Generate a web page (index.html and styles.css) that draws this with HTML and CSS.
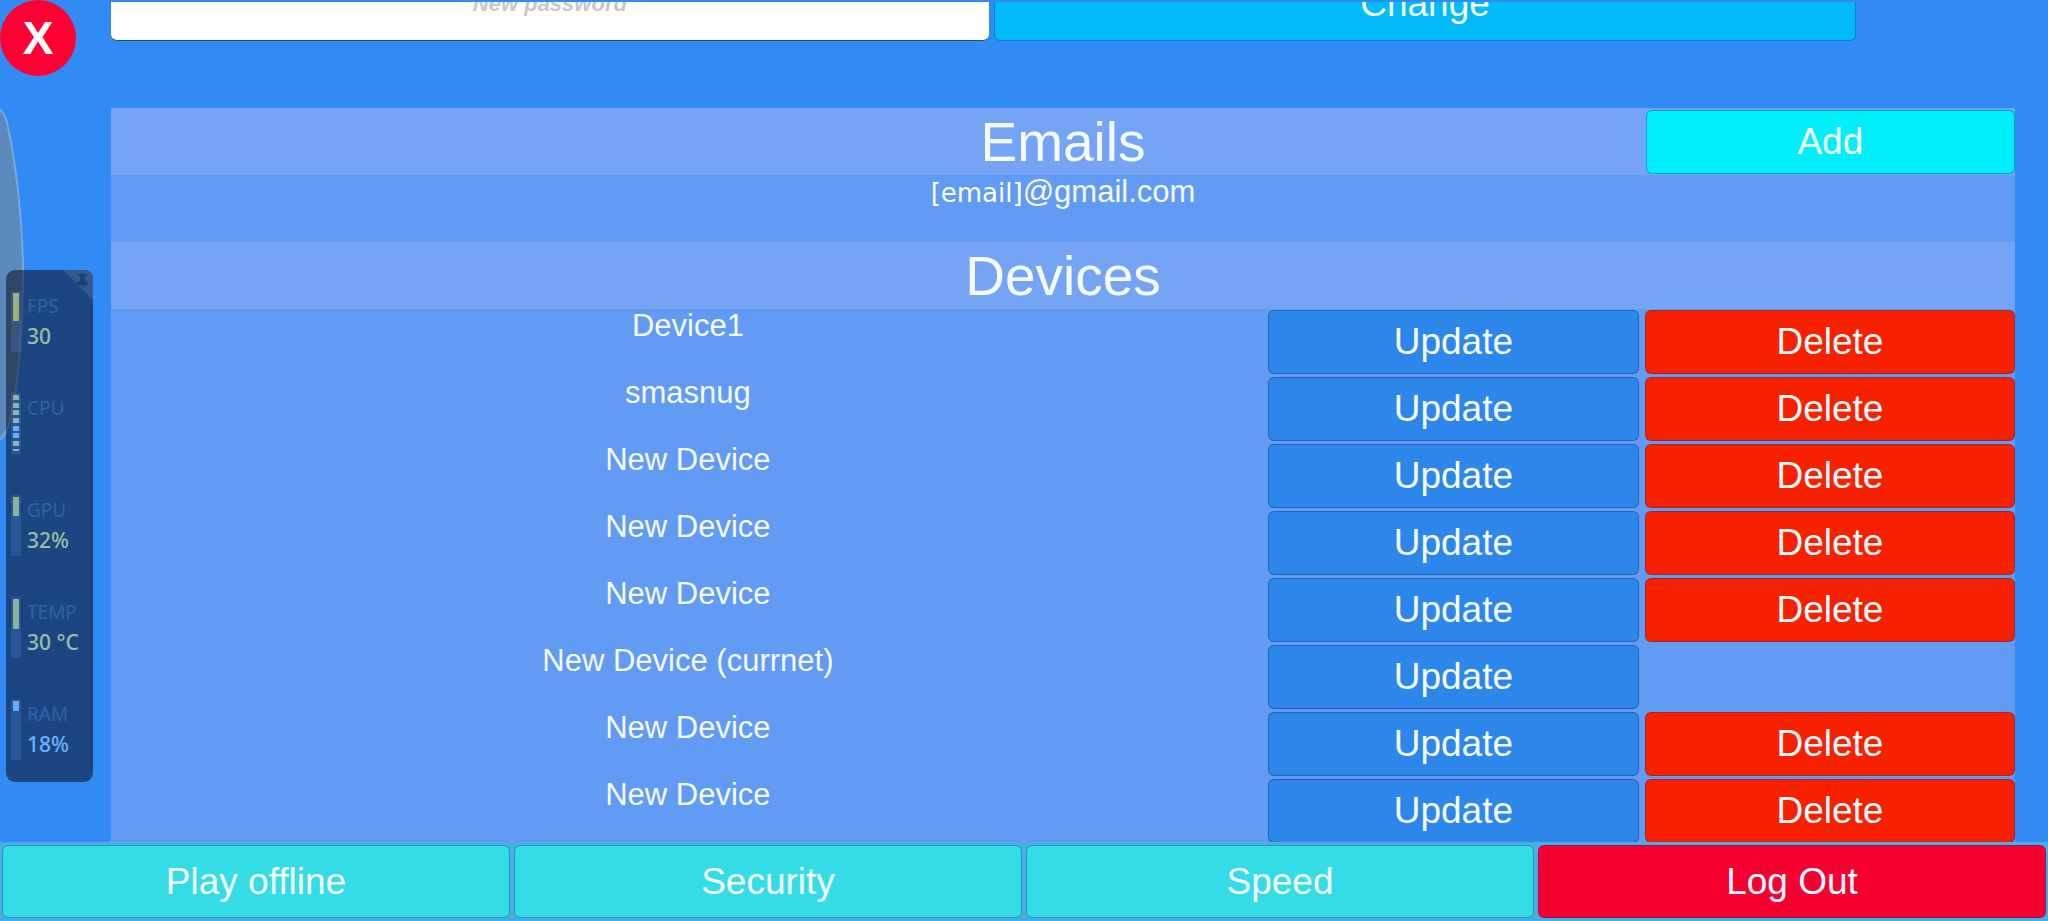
FILE: index.html
```html
<!DOCTYPE html>
<html lang="en">
<head>
  <meta charset="UTF-8">
  <meta name="viewport" content="width=device-width, initial-scale=1.0">
  <title>Account</title>
  <link rel="stylesheet" href="styles.css">
</head>
<body>
  <main class="content">
    <!-- Password -->
    <form class="password-row">
      <input type="password" class="password" placeholder="New password" aria-label="New password">
      <button type="button" class="btn change">Change</button>
    </form>

    <!-- Emails -->
    <section class="panel">
      <div class="panel-head">
        <h2>Emails</h2>
        <button type="button" class="btn add">Add</button>
      </div>
      <div class="email"><span class="masked">[email]</span>@gmail.com</div>
    </section>

    <!-- Devices -->
    <section class="panel">
      <div class="panel-head">
        <h2>Devices</h2>
      </div>
      <table class="devices">
        <colgroup>
          <col>
          <col class="col-update">
          <col class="col-delete">
        </colgroup>
        <tbody>
          <tr>
            <td class="name">Device1</td>
            <td><button type="button" class="btn update">Update</button></td>
            <td><button type="button" class="btn delete">Delete</button></td>
          </tr>
          <tr>
            <td class="name">smasnug</td>
            <td><button type="button" class="btn update">Update</button></td>
            <td><button type="button" class="btn delete">Delete</button></td>
          </tr>
          <tr>
            <td class="name">New Device</td>
            <td><button type="button" class="btn update">Update</button></td>
            <td><button type="button" class="btn delete">Delete</button></td>
          </tr>
          <tr>
            <td class="name">New Device</td>
            <td><button type="button" class="btn update">Update</button></td>
            <td><button type="button" class="btn delete">Delete</button></td>
          </tr>
          <tr>
            <td class="name">New Device</td>
            <td><button type="button" class="btn update">Update</button></td>
            <td><button type="button" class="btn delete">Delete</button></td>
          </tr>
          <tr>
            <td class="name">New Device (currnet)</td>
            <td><button type="button" class="btn update">Update</button></td>
            <td></td>
          </tr>
          <tr>
            <td class="name">New Device</td>
            <td><button type="button" class="btn update">Update</button></td>
            <td><button type="button" class="btn delete">Delete</button></td>
          </tr>
          <tr>
            <td class="name">New Device</td>
            <td><button type="button" class="btn update">Update</button></td>
            <td><button type="button" class="btn delete">Delete</button></td>
          </tr>
        </tbody>
      </table>
    </section>
  </main>

  <!-- Bottom menu -->
  <nav class="menu">
    <button type="button" class="btn">Play offline</button>
    <button type="button" class="btn">Security</button>
    <button type="button" class="btn">Speed</button>
    <button type="button" class="btn logout">Log Out</button>
  </nav>

  <button type="button" class="close">X</button>

  <!-- Edge handle -->
  <svg class="handle" width="26" height="336" viewBox="0 0 26 336" aria-hidden="true">
    <path d="M-2 2C4 5 7 14 9 26C16 60 23 115 23 168C23 221 18 280 11 310C8 324 4 332 -2 335Z" fill="#5d8abd" stroke="#74a9de" stroke-width="2"/>
  </svg>

  <!-- Performance overlay -->
  <aside class="stats">
    <svg class="pin" width="30" height="30" viewBox="0 0 30 30" aria-hidden="true">
      <path d="M0 0H21Q30 0 30 9V30Z" fill="#35598c"/>
      <path d="M15 4H24V6L22 7V11L25 13V15H21L20 18L19 15H14V13L17 11V7L15 6Z" fill="#1b4175"/>
    </svg>
    <div class="stat fps">
      <div class="bar"><div class="fill" style="height: 28px"></div></div>
      <div><div class="label">FPS</div><div class="value">30</div></div>
    </div>
    <div class="stat">
      <div class="bar">
        <svg class="cores" width="6" height="57" viewBox="0 0 6 57" aria-hidden="true">
          <path d="M0 0H6V5H0ZM0 8H6V13H0ZM0 15H6V20H0ZM0 23H6V28H0ZM0 46H6V51H0ZM0 54H6V56H0Z" fill="#8bb8a6"/>
          <path d="M0 31H6V36H0ZM0 38H6V43H0Z" fill="#66adff"/>
        </svg>
      </div>
      <div><div class="label">CPU</div></div>
    </div>
    <div class="stat">
      <div class="bar"><div class="fill" style="height: 19px"></div></div>
      <div><div class="label">GPU</div><div class="value">32%</div></div>
    </div>
    <div class="stat">
      <div class="bar"><div class="fill" style="height: 30px"></div></div>
      <div><div class="label">TEMP</div><div class="value">30 °C</div></div>
    </div>
    <div class="stat ram">
      <div class="bar"><div class="fill" style="height: 10px"></div></div>
      <div><div class="label">RAM</div><div class="value">18%</div></div>
    </div>
  </aside>
</body>
</html>
```

FILE: styles.css
```css
* {
  box-sizing: border-box;
}
body {
  display: flex;
  flex-direction: column;
  height: 100vh;
  margin: 0;
  overflow: hidden;
  background-color: #328af4;
  color: #f4faff;
  font-family: "Liberation Sans", Arial, sans-serif;
}
.content {
  flex: 1;
  min-height: 0;
  overflow: hidden;
  padding: 2px 33px 0 111px;
}
.btn {
  width: 100%;
  height: 64px;
  padding: 0;
  border: 1px solid rgba(20, 50, 110, 0.4);
  border-radius: 6px;
  background-color: #34dde5;
  color: #f4faff;
  font-family: inherit;
  font-size: 37px;
  cursor: pointer;
}

/* password, scrolled half out at the top */
.password-row {
  display: grid;
  grid-template-columns: 46.1% 45.3%;
  align-content: end;
  gap: 5px;
  height: 39px;
  margin-bottom: 67px;
  overflow: hidden;
}
.password {
  width: 100%;
  height: 74px;
  padding: 0 10px;
  border: 0;
  border-bottom: 1px solid #2a4a78;
  border-radius: 6px;
  background-color: #fff;
  font-family: inherit;
  font-size: 22px;
  font-style: italic;
  font-weight: bold;
  text-align: center;
}
.password::placeholder {
  color: #c8c8c8;
}
.btn.change {
  height: 74px;
  background-color: #00bbf7;
}

/* panels */
.panel {
  background-color: #629bf4;
}
.panel-head {
  display: grid;
  grid-template-columns: 19.4% 1fr 19.4%;
  align-items: center;
  height: 67px;
  background-color: #76a4f5;
}
.panel-head h2 {
  grid-column: 2;
  margin: 0;
  font-size: 55px;
  font-weight: normal;
  line-height: 64px;
  text-align: center;
}
.btn.add {
  background-color: #00f0fa;
}
.email {
  height: 67px;
  font-size: 31px;
  line-height: 34px;
  text-align: center;
}
.masked {
  font-family: "DejaVu Sans", Verdana, sans-serif;
  font-size: 26px;
  color: #fff;
}
.devices {
  width: 100%;
  table-layout: fixed;
  border-collapse: collapse;
}
.col-update {
  width: 19.8%;
}
.col-delete {
  width: 19.6%;
}
.devices td {
  height: 67px;
  padding: 1px 0 2px 3px;
  vertical-align: top;
}
.devices td:nth-child(2) {
  padding-right: 3px;
}
.devices .name {
  padding: 0;
  font-size: 31px;
  line-height: 34px;
  text-align: center;
}
.devices .btn {
  display: block;
}
.btn.update {
  background-color: #2d86ea;
}
.btn.delete {
  background-color: #f72100;
}

/* bottom menu */
.menu {
  display: grid;
  grid-template-columns: repeat(4, 1fr);
  gap: 4px;
  padding: 3px 2px;
  background-color: #47aee8;
}
.menu .btn {
  height: 73px;
}
.menu .logout {
  background-color: #f60032;
}

/* overlays */
.close {
  position: absolute;
  top: 0;
  left: 0;
  width: 76px;
  height: 76px;
  padding: 0;
  border: 0;
  border-radius: 50%;
  background-color: #ff0033;
  color: #fff;
  font-family: inherit;
  font-size: 46px;
  font-weight: bold;
  cursor: pointer;
}
.handle {
  position: absolute;
  top: 106px;
  left: 0;
}
.stats {
  position: absolute;
  top: 270px;
  left: 6px;
  display: grid;
  gap: 41px;
  width: 87px;
  padding: 21px 0 22px 5px;
  border-radius: 9px;
  background-color: rgba(3, 2, 16, 0.5);
  font-family: "Noto Sans", sans-serif;
}
.pin {
  position: absolute;
  top: 0;
  right: 0;
}
.stat {
  display: flex;
  gap: 6px;
  height: 61px;
  color: #9abf9f;
  line-height: 30px;
  white-space: nowrap;
}
.bar {
  width: 10px;
  padding: 2px;
  background-color: rgba(80, 130, 200, 0.25);
}
.fill {
  background-color: #88b59a;
}
.fps .fill {
  background-color: #9cb07e;
}
.ram .fill {
  background-color: #66adff;
}
.cores {
  display: block;
}
.label {
  color: #2f62a6;
  font-size: 19px;
}
.value {
  font-size: 21px;
  font-weight: 500;
}
.ram .value {
  color: #6cb0ff;
}
```
